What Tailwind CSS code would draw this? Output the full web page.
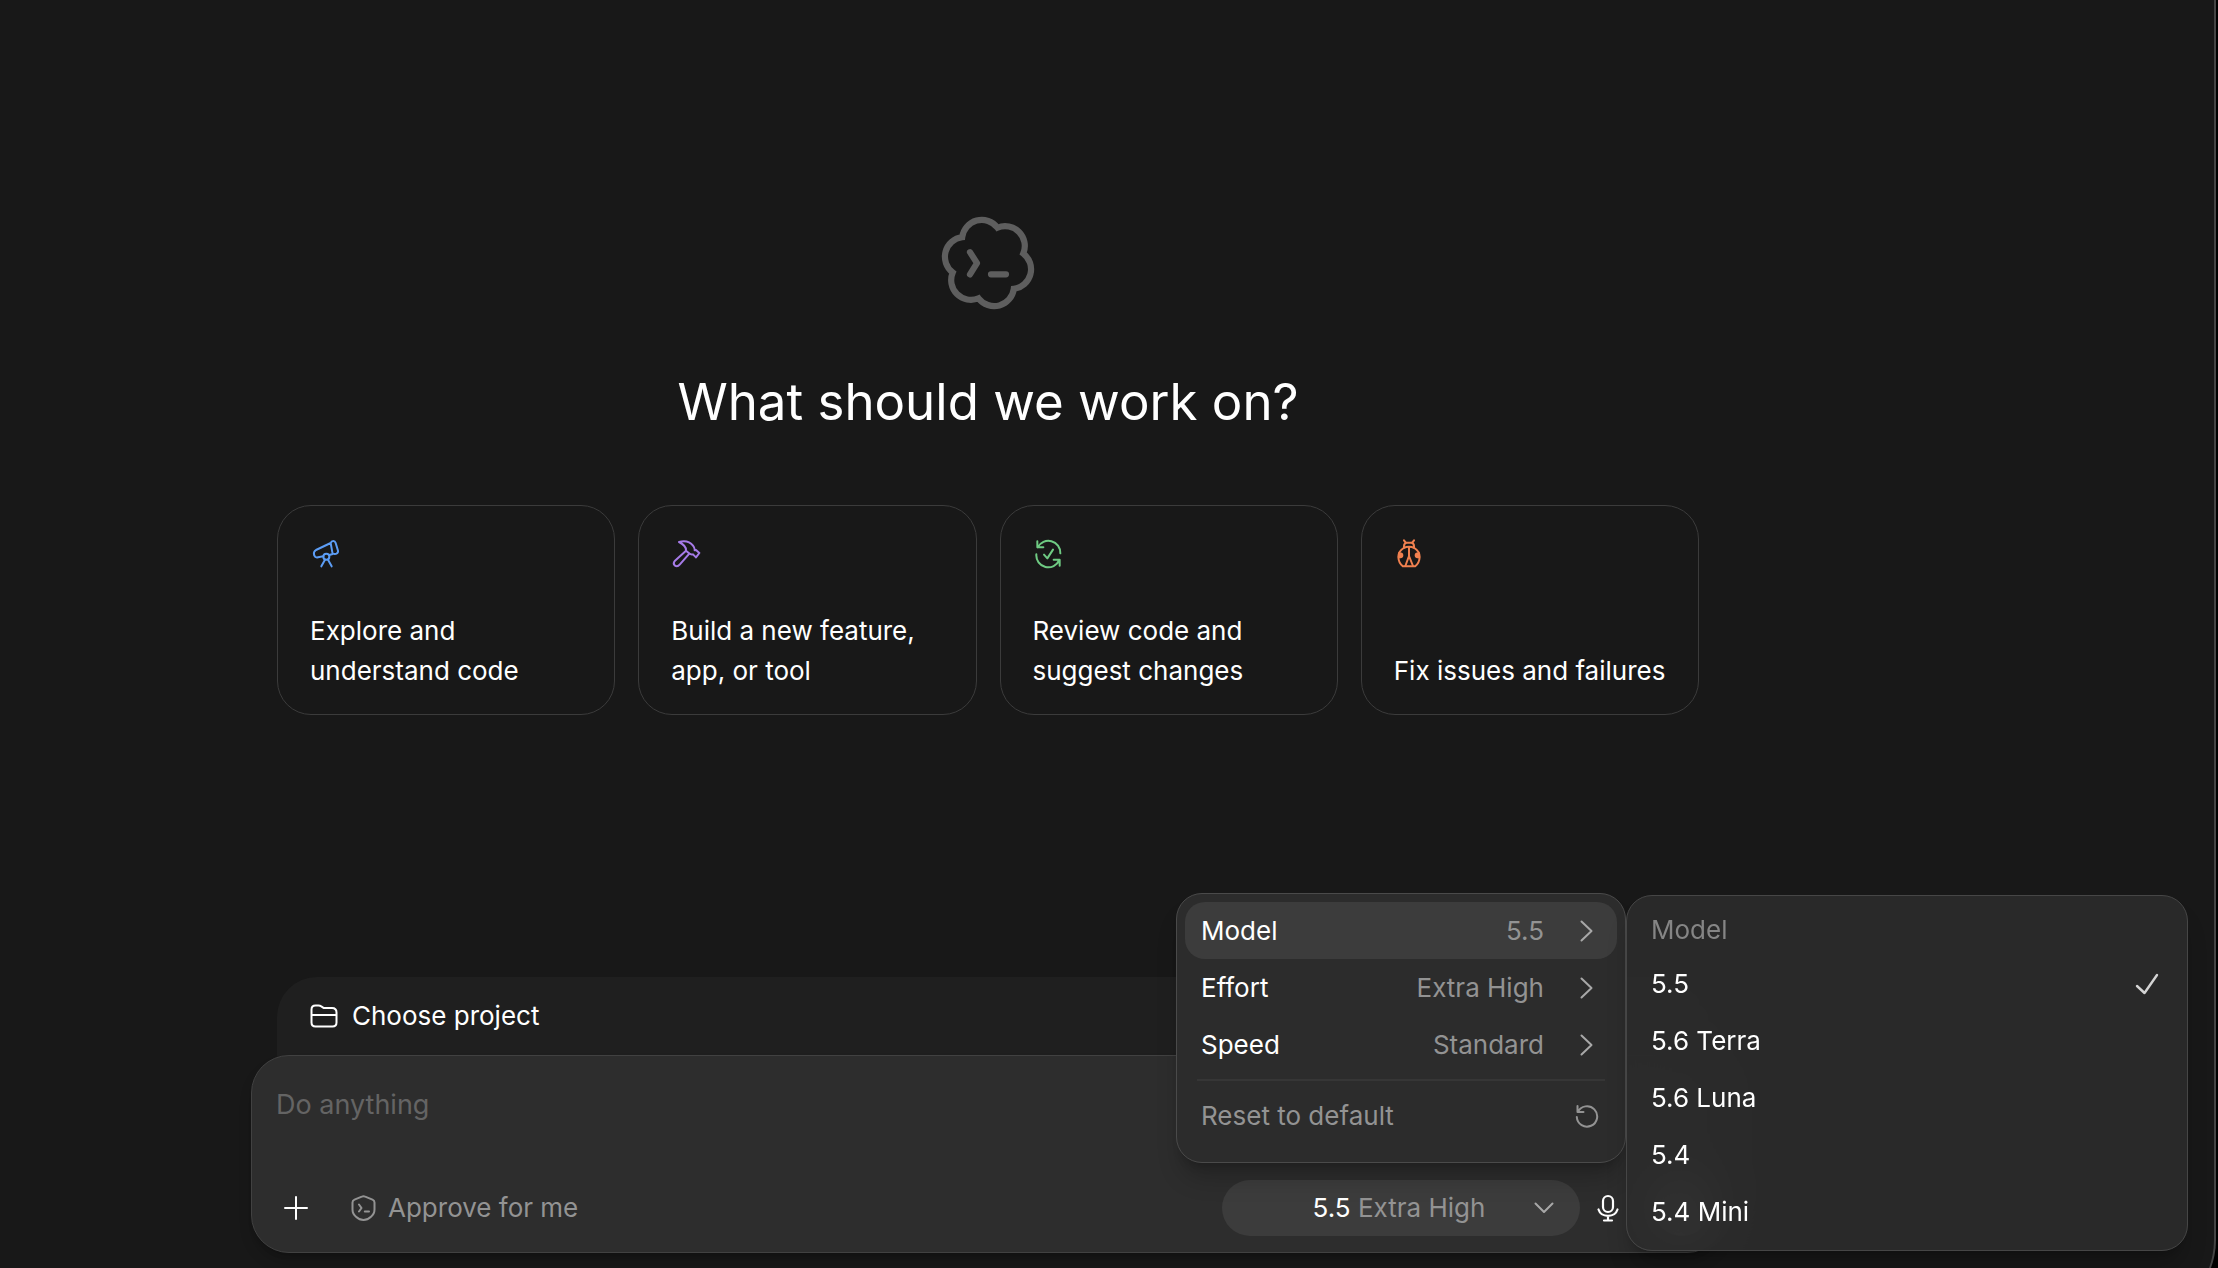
<!DOCTYPE html>
<html lang="en">
<head>
  <meta charset="UTF-8" />
  <meta name="viewport" content="width=device-width, initial-scale=1.0" />
  <title>New task</title>
  <script src="https://cdn.jsdelivr.net/npm/@tailwindcss/browser@4"></script>
</head>
<body class="h-screen overflow-hidden bg-black font-['Inter',sans-serif] text-[26px] leading-10 text-white">

  <!-- App window -->
  <div class="mr-[2px] h-[calc(100vh+52px)] rounded-br-[80px] border-r-2 border-[#444] bg-[#181818]">
    <main class="flex h-screen flex-col items-center pt-[216px] pr-[238px] pb-[15px]">

      <!-- Hero -->
      <svg class="size-[94px] shrink-0 text-[#5e5e5e]" viewBox="-47 -47 94 94" fill="none" stroke="currentColor" stroke-width="6.2" aria-hidden="true">
        <path d="M35.26-9.45A19.7 19.7 0 0 1 25.81 25.81A19.7 19.7 0 0 1-9.45 35.26A19.7 19.7 0 0 1-35.26 9.45A19.7 19.7 0 0 1-25.81-25.81A19.7 19.7 0 0 1 9.45-35.26A19.7 19.7 0 0 1 35.26-9.45Z" />
        <path d="M-18-10.8L-11 .2L-18 11.4M3 11.3H18" stroke-linecap="round" stroke-linejoin="round" />
      </svg>
      <h1 class="mt-[60px] text-[51px] leading-[64px]">What should we work on?</h1>

      <!-- Suggestions -->
      <div class="mt-[71px] grid w-full max-w-[1422px] grid-cols-4 gap-[23px]">
        <button class="flex h-[210px] flex-col items-start justify-between rounded-[34px] border border-[#3b3b3b] px-8 pt-[33px] pb-[23px] text-left">
          <svg class="size-[30px] text-[#5c9df5]" viewBox="-4 0 90 90" fill="none" stroke="currentColor" stroke-width="6" stroke-linecap="round" stroke-linejoin="round" aria-hidden="true">
            <path d="M58 12L14 33Q6 38 8 46L9 50Q12 57 20 55L36 52M54 48L64 45M58 12Q60 6 66 6Q71 6 73 12L80 35Q81 42 75 44L69 45Q64 45 63 40Z" />
            <circle cx="45" cy="53" r="9" />
            <path d="M41 62L30 82M50 62L61 82" />
          </svg>
          <span>Explore and<br />understand code</span>
        </button>
        <button class="flex h-[210px] flex-col items-start justify-between rounded-[34px] border border-[#3b3b3b] px-8 pt-[33px] pb-[23px] text-left">
          <svg class="size-[30px] text-[#a67be8]" viewBox="0 0 90 90" fill="none" stroke="currentColor" stroke-width="6" stroke-linecap="round" stroke-linejoin="round" aria-hidden="true">
            <path d="M24 9Q52 2 66 20Q72 28 71 34L75 33L85 42L75 55L66 46Q60 48 54 43L45 35Q46 20 24 9Z" />
            <path d="M45 35L12 65Q5 73 11 79Q19 85 26 77L55 44" />
          </svg>
          <span>Build a new feature,<br />app, or tool</span>
        </button>
        <button class="flex h-[210px] flex-col items-start justify-between rounded-[34px] border border-[#3b3b3b] px-8 pt-[33px] pb-[23px] text-left">
          <svg class="size-[30px] text-[#6fcb83]" viewBox="4 0 90 90" fill="none" stroke="currentColor" stroke-width="6" stroke-linecap="round" stroke-linejoin="round" aria-hidden="true">
            <path d="M18 25A36 36 0 0 1 86 43M17 7V25H35" />
            <path d="M14 46A36 36 0 0 0 83 63M84 80V62H66" />
            <path d="M37 47L47 58L64 32" />
          </svg>
          <span>Review code and<br />suggest changes</span>
        </button>
        <button class="flex h-[210px] flex-col items-start justify-between rounded-[34px] border border-[#3b3b3b] px-8 pt-[33px] pb-[23px] text-left">
          <svg class="size-[30px] text-[#f0804f]" viewBox="8 0 90 90" fill="none" stroke="currentColor" stroke-width="6" stroke-linecap="round" stroke-linejoin="round" aria-hidden="true">
            <path d="M37 27Q21 37 21 54Q22 73 35 82H71Q84 73 85 54Q85 37 69 27Q53 20 37 27Z" />
            <path d="M38 25Q37 12 46 11H60Q69 12 68 25M38 4L43 11M68 4L63 11M53 25V51L42 81M53 51L65 81" />
            <path d="M21 40Q37 39 36 50Q35 59 21 58ZM85 40Q69 39 70 50Q71 59 85 58Z" fill="currentColor" stroke="none" />
          </svg>
          <span>Fix issues and failures</span>
        </button>
      </div>

      <!-- Composer -->
      <div class="relative mt-auto w-full max-w-[1474px]">
        <div class="mx-[26px] -mb-9 flex h-[114px] items-start rounded-t-[40px] bg-[#1f1f1f] px-[33px] pt-[19px]">
          <button class="flex items-center gap-[14px]">
            <svg class="h-[24px] w-[28px]" viewBox="0 0 28 24" fill="none" stroke="currentColor" stroke-width="2" stroke-linejoin="round" aria-hidden="true">
              <path d="M1.5 10.5V5.5Q1.5 1.5 5.5 1.5H8.5Q10 1.5 11.3 2.4L12.7 3.3Q13.8 4 15 4H22Q26.5 4 26.5 8.5V18.5Q26.5 22.5 22.5 22.5H5.5Q1.5 22.5 1.5 18.5ZM1.5 11H26.5" />
            </svg>
            Choose project
          </button>
        </div>

        <form class="relative flex h-[198px] flex-col justify-between rounded-[38px] border border-[#414141] bg-[#2d2d2d] pt-6 pr-[14px] pb-4 pl-5 shadow-lg shadow-black/20" onsubmit="return false">
          <label for="prompt" class="sr-only">Prompt</label>
          <input id="prompt" type="text" placeholder="Do anything" class="h-12 w-full bg-transparent px-1 text-[27px] outline-none placeholder:text-[#646464]" />
          <div class="flex items-center pl-1">
            <button type="button" aria-label="Add" class="flex size-10 items-center justify-center">
              <svg class="size-6" viewBox="0 0 24 24" fill="none" stroke="currentColor" stroke-width="2" stroke-linecap="round"><path d="M12 1V23M1 12H23" /></svg>
            </button>
            <button type="button" class="ml-[35px] flex items-center gap-3 text-[#939393]">
              <svg class="h-[26px] w-[25px]" viewBox="0 0 25 26" fill="none" stroke="currentColor" stroke-width="2" stroke-linecap="round" stroke-linejoin="round" aria-hidden="true">
                <path d="M10.8 1.6Q12.5 .8 14.2 1.6L21.5 4.6Q23.5 5.5 23.5 7.5V14.5Q23.5 19 20 21.7Q16.5 25 12.5 25T5 21.7Q1.5 19 1.5 14.5V7.5Q1.5 5.5 3.5 4.6ZM8 9.5L10.5 13L8 16.5M13.8 16.5H18" />
              </svg>
              Approve for me
            </button>
            <button type="button" class="ml-auto flex h-14 w-[358px] items-center rounded-full bg-[#3c3c3c] pr-[26px] pl-[42px]">
              <span class="flex-1 text-center">5.5 <span class="text-[#939393]">Extra High</span></span>
              <svg class="h-3 w-5 text-[#a8a8a8]" viewBox="0 0 20 12" fill="none" stroke="currentColor" stroke-width="2" stroke-linecap="round" stroke-linejoin="round" aria-hidden="true"><path d="M1.5 1.5L10 10L18.5 1.5" /></svg>
            </button>
            <button type="button" aria-label="Dictate" class="flex w-14 justify-center">
              <svg class="h-7 w-[22px]" viewBox="0 0 22 28" fill="none" stroke="currentColor" stroke-width="2.2" stroke-linecap="round" aria-hidden="true">
                <rect x="6" y="2" width="10" height="16" rx="5" />
                <path d="M1.5 15.5Q3.5 21.8 11 21.8T20.5 15.5M11 22V26M7 26.5H15" />
              </svg>
            </button>
            <button type="button" aria-label="Send" class="ml-[18px] size-14 rounded-full bg-[#9c9c9c]"></button>
          </div>
        </form>

        <!-- Settings menu -->
        <div class="absolute right-[99px] bottom-[90px] h-[270px] w-[450px] rounded-[26px] border border-[#4a4a4a] bg-[#2c2c2c] p-2 shadow-xl shadow-black/20">
          <button class="flex h-[57px] w-full items-center rounded-[20px] bg-[#3c3c3c] px-4">
            Model
            <span class="ml-auto text-[#939393]">5.5</span>
            <svg class="ml-9 h-[22px] w-[13px] text-[#a8a8a8]" viewBox="0 0 13 22" fill="none" stroke="currentColor" stroke-width="2" stroke-linecap="round" stroke-linejoin="round" aria-hidden="true"><path d="M1.5 1.5L11.5 11L1.5 20.5" /></svg>
            <span class="w-2"></span>
          </button>
          <button class="flex h-[57px] w-full items-center px-4">
            Effort
            <span class="ml-auto text-[#939393]">Extra High</span>
            <svg class="ml-9 h-[22px] w-[13px] text-[#a8a8a8]" viewBox="0 0 13 22" fill="none" stroke="currentColor" stroke-width="2" stroke-linecap="round" stroke-linejoin="round" aria-hidden="true"><path d="M1.5 1.5L11.5 11L1.5 20.5" /></svg>
            <span class="w-2"></span>
          </button>
          <button class="flex h-[57px] w-full items-center px-4">
            Speed
            <span class="ml-auto text-[#939393]">Standard</span>
            <svg class="ml-9 h-[22px] w-[13px] text-[#a8a8a8]" viewBox="0 0 13 22" fill="none" stroke="currentColor" stroke-width="2" stroke-linecap="round" stroke-linejoin="round" aria-hidden="true"><path d="M1.5 1.5L11.5 11L1.5 20.5" /></svg>
            <span class="w-2"></span>
          </button>
          <hr class="mx-3 mt-[6px] mb-[6px] border-t-2 border-[#363636]" />
          <button class="flex h-[57px] w-full items-center justify-between px-4 text-[#939393]">
            Reset to default
            <svg class="mr-[2px] size-6" viewBox="0 0 24 24" fill="none" stroke="currentColor" stroke-width="2" stroke-linecap="round" stroke-linejoin="round" aria-hidden="true">
              <path d="M2.5 2V8H8.5M2.8 8A10.2 10.2 0 1 1 1.8 13" />
            </svg>
          </button>

          <!-- Model submenu -->
          <div class="absolute top-[1px] left-full ml-px h-[356px] w-[562px] rounded-[26px] border border-[#464646] bg-[#2b2b2b]/93 px-6 pt-2 shadow-xl shadow-black/20 backdrop-blur-xl">
            <p class="h-[51px] leading-[51px] text-[#858585]">Model</p>
            <button class="flex h-[57px] w-full items-center justify-between">
              5.5
              <svg class="mr-[4px] h-[22px] w-6 text-[#d4d4d4]" viewBox="0 0 24 22" fill="none" stroke="currentColor" stroke-width="2.4" stroke-linecap="round" stroke-linejoin="round" aria-hidden="true"><path d="M2 13L9.5 20L22 2" /></svg>
            </button>
            <button class="block h-[57px] w-full text-left">5.6 Terra</button>
            <button class="block h-[57px] w-full text-left">5.6 Luna</button>
            <button class="block h-[57px] w-full text-left">5.4</button>
            <button class="block h-[57px] w-full text-left">5.4 Mini</button>
          </div>
        </div>
      </div>
    </main>
  </div>
</body>
</html>
